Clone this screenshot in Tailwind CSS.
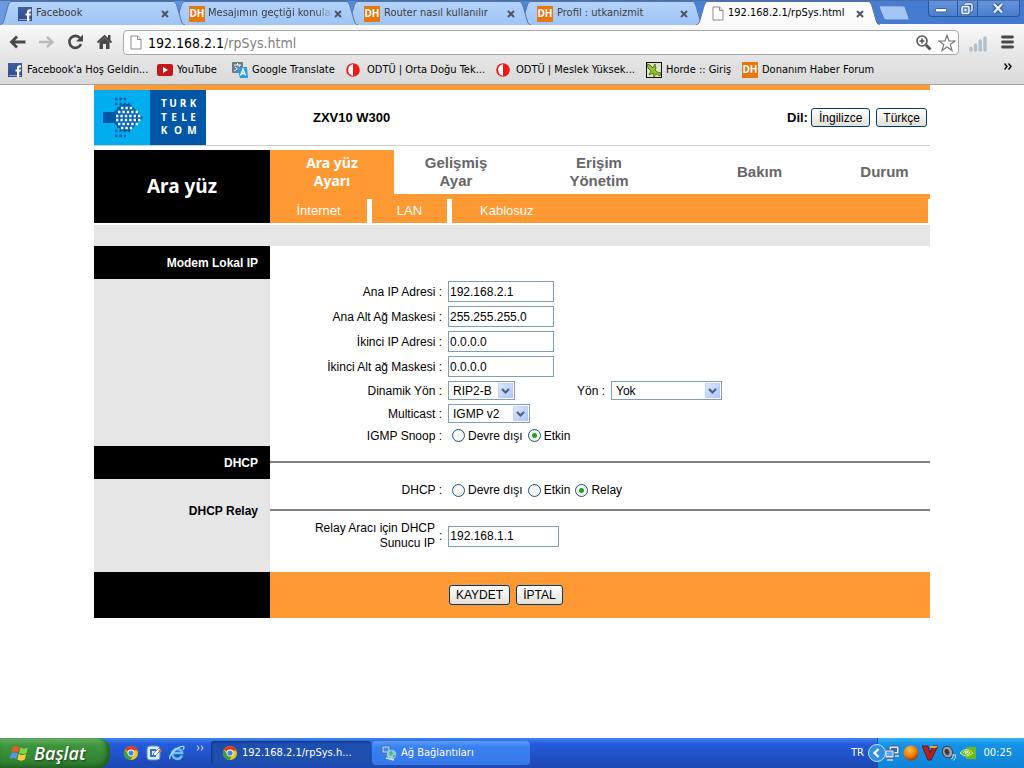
<!DOCTYPE html>
<html lang="tr">
<head>
<meta charset="utf-8">
<title>192.168.2.1/rpSys.html</title>
<script src="https://cdn.jsdelivr.net/npm/@tailwindcss/browser@4"></script>
</head>
<body class="flex min-h-screen flex-col bg-white font-['Liberation_Sans',Arial,sans-serif] text-xs text-black">

<svg class="absolute h-0 w-0" aria-hidden="true">
  <defs>
    <linearGradient id="tabfill" x1="0" y1="0" x2="0" y2="1"><stop offset="0" stop-color="#b4d2fb"/><stop offset="1" stop-color="#9fc4f5"/></linearGradient>
    <linearGradient id="fbg" x1="0" y1="0" x2="0" y2="1"><stop offset="0" stop-color="#3f5f9f"/><stop offset="1" stop-color="#2f4c88"/></linearGradient>
    <linearGradient id="arrowbg" x1="0" y1="0" x2="1" y2="1"><stop offset="0" stop-color="#dfe8ff"/><stop offset="1" stop-color="#adc5fb"/></linearGradient>
    <radialGradient id="ball" cx=".4" cy=".3" r=".7"><stop offset="0" stop-color="#ffc04a"/><stop offset=".6" stop-color="#f57c00"/><stop offset="1" stop-color="#a83c00"/></radialGradient>
  </defs>
  <symbol id="slopeL" viewBox="0 0 12 24"><path d="M0 24C3 23 3 22 4 19L8 5C9 2 10 .5 12 .5V24Z" fill="url(#tabfill)"/><path d="M0 24C3 23 3 22 4 19L8 5C9 2 10 .5 12 .5" fill="none" stroke="#4f74ad"/></symbol>
  <symbol id="slopeR" viewBox="0 0 12 24"><path d="M12 24C9 23 9 22 8 19L4 5C3 2 2 .5 0 .5V24Z" fill="url(#tabfill)"/><path d="M12 24C9 23 9 22 8 19L4 5C3 2 2 .5 0 .5" fill="none" stroke="#4f74ad"/></symbol>
  <symbol id="slopeLa" viewBox="0 0 12 24"><path d="M0 24C3 23 3 22 4 19L8 5C9 2 10 .5 12 .5V24Z" fill="#fafafa"/><path d="M0 24C3 23 3 22 4 19L8 5C9 2 10 .5 12 .5" fill="none" stroke="#4f74ad"/></symbol>
  <symbol id="slopeRa" viewBox="0 0 12 24"><path d="M12 24C9 23 9 22 8 19L4 5C3 2 2 .5 0 .5V24Z" fill="#fafafa"/><path d="M12 24C9 23 9 22 8 19L4 5C3 2 2 .5 0 .5" fill="none" stroke="#4f74ad"/></symbol>
  <symbol id="fb" viewBox="0 0 14 14"><rect width="14" height="14" fill="url(#fbg)"/><rect x="1" y="12" width="12" height="1" fill="#8fa6d3"/><path d="M9 14V8.500H7.500V6.500H9V5.200C9 3.200 10 2.300 11.600 2.300H13V4.400H12C11.300 4.400 11.200 4.800 11.200 5.400V6.500H13L12.700 8.500H11.200V14Z" fill="#fff"/></symbol>
  <symbol id="close" viewBox="0 0 8 8"><path d="M1 1L7 7M7 1L1 7" stroke="#4d5663" stroke-width="2"/></symbol>
  <symbol id="doc" viewBox="0 0 12 15"><path d="M1 1H7.500L11 4.500V14H1Z" fill="#fff" stroke="#8a8a8a"/><path d="M7.500 1V4.500H11" fill="#e4e4e4" stroke="#8a8a8a"/></symbol>
  <symbol id="odtu" viewBox="0 0 14 14"><circle cx="7" cy="7" r="6.800" fill="#f01818"/><path d="M7 1C.5 2.500 .5 11.500 7 13Z" fill="#fff"/></symbol>
  <symbol id="chrome" viewBox="0 0 16 16"><circle cx="8" cy="8" r="7" fill="#f2c41c"/><path d="M8 8L2 4.400A7 7 0 0 1 14.600 5.500H8Z" fill="#dc3b27"/><path d="M8 8L5.200 9.500L1.900 4.500A7 7 0 0 0 7.500 15L10.500 9.500Z" fill="#3a9d42"/><circle cx="8" cy="8" r="3.400" fill="#fff"/><circle cx="8" cy="8" r="2.600" fill="#4286d6"/></symbol>
  <symbol id="selarrow" viewBox="0 0 15 15"><rect width="15" height="15" rx="1.500" fill="url(#arrowbg)" stroke="#b5c9f7"/><path d="M4 6L7.500 9.500L11 6" fill="none" stroke="#4d6185" stroke-width="2.200"/></symbol>
</svg>

<!-- Browser chrome -->
<header class="font-['DejaVu_Sans_Condensed','DejaVu_Sans',sans-serif] text-[11px]">
  <div class="flex h-6 items-start justify-between border-t border-[#4c6fa8] bg-linear-to-r from-[#6b9ae2] via-[#5087dc] to-[#4278cf]">
    <nav class="flex text-[#3c3c3c]" aria-label="Sekmeler">
      <div class="relative z-40 flex h-6 w-[185px]">
        <svg class="h-6 w-3 shrink-0"><use href="#slopeL"/></svg>
        <div class="flex min-w-0 flex-1 items-center gap-1 border-t border-[#4f74ad] bg-linear-to-b from-[#b4d2fb] to-[#9fc4f5] pl-1.5">
          <svg class="size-3.5 shrink-0"><use href="#fb"/></svg><a href="#" class="flex-1 truncate">Facebook</a>
          <button aria-label="Kapat" class="mr-1"><svg class="size-2"><use href="#close"/></svg></button>
        </div>
        <svg class="h-6 w-3 shrink-0"><use href="#slopeR"/></svg>
      </div>
      <div class="relative z-30 -ml-3 flex h-6 w-[185px]">
        <svg class="h-6 w-3 shrink-0"><use href="#slopeL"/></svg>
        <div class="flex min-w-0 flex-1 items-center border-t border-[#4f74ad] bg-linear-to-b from-[#b4d2fb] to-[#9fc4f5] pl-1">
          <b class="mr-[3px] flex h-4 w-4 shrink-0 items-center justify-center bg-[#e5770d] font-['Open_Sans',sans-serif] text-[10px] text-white">DH</b><a href="#" class="flex-1 overflow-hidden whitespace-nowrap mask-r-from-85%">Mesajımın geçtiği konular</a>
          <button aria-label="Kapat" class="mr-1"><svg class="size-2"><use href="#close"/></svg></button>
        </div>
        <svg class="h-6 w-3 shrink-0"><use href="#slopeR"/></svg>
      </div>
      <div class="relative z-20 -ml-3 flex h-6 w-[185px]">
        <svg class="h-6 w-3 shrink-0"><use href="#slopeL"/></svg>
        <div class="flex min-w-0 flex-1 items-center gap-1 border-t border-[#4f74ad] bg-linear-to-b from-[#b4d2fb] to-[#9fc4f5] pl-1.5">
          <b class="flex h-4 w-4 shrink-0 items-center justify-center bg-[#e5770d] font-['Open_Sans',sans-serif] text-[10px] text-white">DH</b><a href="#" class="flex-1 truncate">Router nasıl kullanılır</a>
          <button aria-label="Kapat" class="mr-1"><svg class="size-2"><use href="#close"/></svg></button>
        </div>
        <svg class="h-6 w-3 shrink-0"><use href="#slopeR"/></svg>
      </div>
      <div class="relative z-10 -ml-3 flex h-6 w-[185px]">
        <svg class="h-6 w-3 shrink-0"><use href="#slopeL"/></svg>
        <div class="flex min-w-0 flex-1 items-center gap-1 border-t border-[#4f74ad] bg-linear-to-b from-[#b4d2fb] to-[#9fc4f5] pl-1.5">
          <b class="flex h-4 w-4 shrink-0 items-center justify-center bg-[#e5770d] font-['Open_Sans',sans-serif] text-[10px] text-white">DH</b><a href="#" class="flex-1 truncate">Profil : utkanizmit</a>
          <button aria-label="Kapat" class="mr-1"><svg class="size-2"><use href="#close"/></svg></button>
        </div>
        <svg class="h-6 w-3 shrink-0"><use href="#slopeR"/></svg>
      </div>
      <div class="relative z-50 -ml-2 flex h-6 w-[184px] text-black">
        <svg class="h-6 w-3 shrink-0"><use href="#slopeLa"/></svg>
        <div class="flex min-w-0 flex-1 items-center gap-1 border-t border-[#4f74ad] bg-[#fafafa] pl-1">
          <svg class="h-[15px] w-3 shrink-0"><use href="#doc"/></svg><a href="#" class="flex-1 truncate">192.168.2.1/rpSys.html</a>
          <button aria-label="Kapat" class="mr-1"><svg class="size-2"><use href="#close"/></svg></button>
        </div>
        <svg class="h-6 w-3 shrink-0"><use href="#slopeRa"/></svg>
      </div>
      <button aria-label="Yeni sekme" class="mt-1 -ml-0.5 h-4"><svg class="h-4 w-8" viewBox="0 0 32 16"><path d="M1.500 .8H24C26 .8 27 1.500 27.500 3L31 13.500C31.300 14.600 31 15 30 15H9C7 15 6 14.200 5.500 13L1 2Z" fill="#a4c6f6" stroke="#4f74ad"/></svg></button>
    </nav>
    <div class="mr-1 flex h-4 overflow-hidden rounded-b border border-t-0 border-[#2c5599] bg-linear-to-b from-[#6393dc] to-[#4a7ecd]">
      <button aria-label="Simge durumuna küçült" class="w-[29px] border-r border-[#2c5599]"><svg class="h-4 w-7" viewBox="0 0 28 16"><rect x="6.500" y="7.500" width="11" height="3.500" rx="1" fill="#fff" stroke="#3d5d96"/></svg></button>
      <button aria-label="Önceki boyut" class="w-5 border-r border-[#2c5599]"><svg class="h-4 w-5" viewBox="0 0 20 16"><rect x="7" y="3" width="7" height="7" rx="1" fill="none" stroke="#31548f" stroke-width="3"/><rect x="7" y="3" width="7" height="7" rx="1" fill="none" stroke="#fff" stroke-width="1.400"/><rect x="4" y="5.500" width="7" height="7" rx="1" fill="#5587d3" stroke="#31548f" stroke-width="3"/><rect x="4" y="5.500" width="7" height="7" rx="1" fill="#5587d3" stroke="#fff" stroke-width="1.400"/><rect x="6.500" y="8" width="2" height="2" fill="#fff"/></svg></button>
      <button aria-label="Pencereyi kapat" class="w-[41px]"><svg class="h-4 w-10" viewBox="0 0 40 16"><path d="M16 3L24 11.500M24 3L16 11.500" stroke="#31548f" stroke-width="4.500"/><path d="M16 3L24 11.500M24 3L16 11.500" stroke="#e6eefb" stroke-width="2.500"/></svg></button>
    </div>
  </div>

  <div class="border-b border-[#a4a4a4] bg-linear-to-b from-[#fafafa] via-[#e6e6e6] to-[#dadada]">
    <div class="flex h-8 items-end gap-3 pr-2 pl-[9px]">
      <button aria-label="Geri"><svg class="mb-1.5 h-4 w-[17px]" viewBox="0 0 17 16"><path d="M8 2.500L2.500 8L8 13.500M3 8H16.500" fill="none" stroke="#484848" stroke-width="2.800"/></svg></button>
      <button aria-label="İleri"><svg class="mb-1.5 h-4 w-[17px]" viewBox="0 0 17 16"><path d="M9 3L14.500 8L9 13M14 8H1" fill="none" stroke="#b9b9b9" stroke-width="2.400"/></svg></button>
      <button aria-label="Yenile"><svg class="mb-1.5 h-4 w-[17px]" viewBox="0 0 17 16"><path d="M13 4A6 6 0 1 0 14 10" fill="none" stroke="#484848" stroke-width="2.600"/><path d="M9 7.500H16V.5Z" fill="#484848"/></svg></button>
      <button aria-label="Ana sayfa"><svg class="mb-1.5 h-4 w-[17px]" viewBox="0 0 17 16"><path d="M1.500 8.500L8.500 2L15.500 8.500" fill="none" stroke="#484848" stroke-width="2"/><path d="M12 1H14.500V6H12Z" fill="#484848"/><path d="M3.500 8L8.500 3.500L13.500 8V15H10V10H7V15H3.500Z" fill="#484848"/></svg></button>
      <div class="-ml-0.5 mb-px flex h-[25px] flex-1 items-center gap-1.5 rounded-sm border border-[#a9a9a9] bg-white px-1.5">
        <svg class="h-[15px] w-3 shrink-0"><use href="#doc"/></svg>
        <div class="flex-1 font-['DejaVu_Sans_Condensed','DejaVu_Sans',sans-serif] text-sm">192.168.2.1<span class="text-[#808080]">/rpSys.html</span></div>
        <svg class="size-4" viewBox="0 0 16 16"><circle cx="6" cy="6" r="5" fill="none" stroke="#555" stroke-width="1.600"/><path d="M3.500 6H8.500M6 3.500V8.500" stroke="#555" stroke-width="1.600"/><path d="M10 10L14.500 14.500" stroke="#555" stroke-width="3"/></svg>
        <button aria-label="Yer işareti ekle"><svg class="-mr-1 block size-[18px]" viewBox="0 0 18 18"><path d="M9 1.300L11 6.800L17 7L12.300 10.600L14 16.500L9 13.100L4 16.500L5.700 10.600L1 7L7 6.800Z" fill="#fff" stroke="#777" stroke-width="1.200"/></svg></button>
      </div>
      <svg class="-ml-0.5 mb-1 h-4 w-[18px]" viewBox="0 0 18 16"><path d="M2 14V12.500M6.500 14V9M11.300 14V5M16 14V2" stroke="#b3bfc9" stroke-width="3.400" stroke-linecap="round"/></svg>
      <button aria-label="Menü"><svg class="mr-0.5 mb-1.5 ml-0.5 h-4 w-[13px]" viewBox="0 0 13 16"><path d="M1.500 3H11.500M1.500 8H11.500M1.500 13H11.500" stroke="#484848" stroke-width="2.800" stroke-linecap="round"/></svg></button>
    </div>
    <nav class="flex h-7 items-center pr-2 pl-2" aria-label="Yer işaretleri">
      <a href="#" class="flex w-[149px] items-center gap-[5px] whitespace-nowrap"><svg class="size-3.5"><use href="#fb"/></svg>Facebook'a Hoş Geldin...</a>
      <a href="#" class="flex w-[75px] items-center gap-1 whitespace-nowrap"><svg class="h-4 w-4" viewBox="0 0 16 16"><rect y="2" width="16" height="12" rx="2" fill="#c3191b"/><path d="M6 5L11 8L6 11Z" fill="#fff"/></svg>YouTube</a>
      <a href="#" class="flex w-[113px] items-center gap-1 whitespace-nowrap"><svg class="h-4 w-4" viewBox="0 0 16 16"><rect width="11" height="11" rx="1" fill="#677c85"/><path d="M2 3H9M5.500 1V3M8 3C7 6 4 8 2 9M3 5L8 9" stroke="#fff" fill="none"/><path d="M5 5H15L16 16H8Z" fill="#2b9be8"/><path d="M8.500 13.500L11 7L13.500 13.500M9.500 11.500H12.500" stroke="#fff" stroke-width="1.300" fill="none"/></svg>Google Translate</a>
      <a href="#" class="flex w-[151px] items-center gap-[7px] whitespace-nowrap"><svg class="ml-px size-3.5"><use href="#odtu"/></svg>ODTÜ | Orta Doğu Tek...</a>
      <a href="#" class="flex w-[150px] items-center gap-1.5 whitespace-nowrap"><svg class="size-3.5"><use href="#odtu"/></svg>ODTÜ | Meslek Yüksek...</a>
      <a href="#" class="flex w-24 items-center gap-1 whitespace-nowrap"><svg class="h-4 w-4" viewBox="0 0 16 16"><rect x=".5" y=".5" width="15" height="15" fill="#dfe5c8" stroke="#111"/><path d="M1 2L4 3L7 6L9 2L10 6L9 8L11 10L15 11L14 14L10 12L8 15L7 11L3 13L5 9L2 6Z" fill="#91c42a" stroke="#465f12" stroke-width=".8"/></svg>Horde :: Giriş</a>
      <a href="#" class="flex items-center gap-1 whitespace-nowrap"><b class="flex h-4 w-4 items-center justify-center bg-[#e5770d] font-['Open_Sans',sans-serif] text-[10px] text-white">DH</b>Donanım Haber Forum</a>
      <button aria-label="Diğer yer işaretleri" class="mr-1 mb-2 ml-auto"><svg class="h-[7px] w-2" viewBox="0 0 8 7"><path d="M.5 .5L3 3.500L.5 6.500M4.500 .5L7 3.500L4.500 6.500" fill="none" stroke="#111" stroke-width="1.500"/></svg></button>
    </nav>
  </div>
</header>

<!-- Router settings page -->
<main class="mx-auto w-full max-w-[836px] flex-1">
  <div class="grid grid-cols-[219px_1fr_auto] items-center border-t-[5px] border-b border-t-[#ff9933] border-b-[#cccccc]">
    <svg class="h-[55px] w-28" viewBox="0 0 112 55" role="img" aria-label="Türk Telekom">
      <rect width="56" height="55" fill="#00aeef"/><rect x="56" width="56" height="55" fill="#0057a8"/>
      <path d="M9 22H21V33H9Z" fill="#0057a8"/>
      <path d="M28 14H36L49 27.500L36 41H28L20 33V22Z" fill="#0057a8" opacity=".85"/>
      <g fill="none" stroke-width="2.400" stroke-dasharray="2.400 2">
        <path d="M21 9H32M21 14H36M23 18.500H38M21 41H36M21 46H32M23 36.500H38" stroke="#0057a8"/>
        <path d="M27 18H40M24 22H45M22 26H47M22 30H47M24 34H45M27 38H40" stroke="#fff"/>
      </g>
      <g fill="#fff" font-family="Open Sans, sans-serif" font-size="10" font-weight="700" text-anchor="middle">
        <text x="70" y="17">T</text><text x="79" y="17">U</text><text x="89" y="17">R</text><text x="99" y="17">K</text>
        <text x="70" y="31">T</text><text x="80" y="31">E</text><text x="90" y="31">L</text><text x="99" y="31">E</text>
        <text x="70" y="44">K</text><text x="84" y="44">O</text><text x="98" y="44">M</text>
      </g>
    </svg>
    <b class="text-[13px]">ZXV10 W300</b>
    <div class="flex items-center pr-[3px]">
      <b class="mr-[3px] text-[13px]">Dil:</b>
      <button class="mr-1.5 h-[19px] rounded-[3px] border border-[#003c74] bg-linear-to-b from-white to-[#e3e0d6] px-[7px]">İngilizce</button>
      <button class="h-[19px] rounded-[3px] border border-[#003c74] bg-linear-to-b from-white to-[#e3e0d6] px-1.5">Türkçe</button>
    </div>
  </div>

  <div class="mt-1 grid grid-cols-[176px_1fr]">
    <h1 class="flex items-center justify-center bg-black font-['Noto_Sans',sans-serif] text-[19px] font-bold text-white">Ara yüz</h1>
    <div>
      <nav class="grid h-11 grid-cols-[124px_124px_162px_159px_1fr] items-center text-center text-[15px] leading-[18px] font-bold text-[#666666]" aria-label="Ana menü">
        <a href="#" class="flex h-full items-center justify-center bg-[#ff9933] font-['Noto_Sans',sans-serif] text-sm leading-[18px] text-white">Ara yüz<br>Ayarı</a>
        <a href="#">Gelişmiş<br>Ayar</a>
        <a href="#">Erişim<br>Yönetim</a>
        <a href="#">Bakım</a>
        <a href="#">Durum</a>
      </nav>
      <div class="h-[5px] bg-[#ff9933]"></div>
      <nav class="mr-0.5 grid h-6 grid-cols-[97px_75px_1fr] gap-[5px] text-[13px] leading-6 text-white" aria-label="Alt menü">
        <a href="#" class="bg-[#ff9933] text-center">İnternet</a>
        <a href="#" class="bg-[#ff9933] text-center">LAN</a>
        <a href="#" class="bg-[#ff9933] pl-7">Kablosuz</a>
      </nav>
    </div>
  </div>
  <div class="mt-0.5 h-[21px] bg-[#e6e6e6]"></div>

  <form>
    <section class="grid grid-cols-[176px_1fr]">
      <div class="bg-[#e6e6e6]"><h2 class="h-[33px] bg-black pr-3 text-right leading-[34px] font-bold text-white">Modem Lokal IP</h2></div>
      <div class="pt-[33px]">
        <div class="grid h-[25px] grid-cols-[172px_1fr] items-center gap-1.5"><label for="ip1" class="text-right">Ana IP Adresi :</label><input id="ip1" value="192.168.2.1" class="h-[21px] w-[106px] border border-[#7f9db9] px-px"></div>
        <div class="grid h-[25px] grid-cols-[172px_1fr] items-center gap-1.5"><label for="mask1" class="text-right">Ana Alt Ağ Maskesi :</label><input id="mask1" value="255.255.255.0" class="h-[21px] w-[106px] border border-[#7f9db9] px-px"></div>
        <div class="grid h-[25px] grid-cols-[172px_1fr] items-center gap-1.5"><label for="ip2" class="text-right">İkinci IP Adresi :</label><input id="ip2" value="0.0.0.0" class="h-[21px] w-[106px] border border-[#7f9db9] px-px"></div>
        <div class="grid h-[25px] grid-cols-[172px_1fr] items-center gap-1.5"><label for="mask2" class="text-right">İkinci Alt ağ Maskesi :</label><input id="mask2" value="0.0.0.0" class="h-[21px] w-[106px] border border-[#7f9db9] px-px"></div>
        <div class="grid h-[23px] grid-cols-[172px_1fr] items-center gap-1.5"><label for="rip" class="text-right">Dinamik Yön :</label>
          <div class="flex items-center">
            <span class="relative"><select id="rip" class="block h-[19px] w-[67px] appearance-none border border-[#7f9db9] bg-white pl-1"><option>RIP2-B</option></select><svg class="pointer-events-none absolute top-0.5 right-0.5 size-[15px]"><use href="#selarrow"/></svg></span>
            <label for="dir" class="mr-1.5 w-[90px] text-right">Yön :</label>
            <span class="relative"><select id="dir" class="block h-[19px] w-[111px] appearance-none border border-[#7f9db9] bg-white pl-1"><option>Yok</option></select><svg class="pointer-events-none absolute top-0.5 right-0.5 size-[15px]"><use href="#selarrow"/></svg></span>
          </div></div>
        <div class="grid h-[23px] grid-cols-[172px_1fr] items-center gap-1.5"><label for="multi" class="text-right">Multicast :</label>
          <div class="flex"><span class="relative"><select id="multi" class="block h-[19px] w-[82px] appearance-none border border-[#7f9db9] bg-white pl-1"><option>IGMP v2</option></select><svg class="pointer-events-none absolute top-0.5 right-0.5 size-[15px]"><use href="#selarrow"/></svg></span></div></div>
        <div role="radiogroup" aria-label="IGMP Snoop" class="grid h-[21px] grid-cols-[172px_1fr] items-center gap-1.5"><span class="text-right">IGMP Snoop :</span>
          <div class="flex items-center gap-[5px] pl-1">
            <label class="flex items-center gap-[3px]"><input type="radio" name="snoop" class="size-[13px] appearance-none rounded-full border border-[#1c5180] bg-[#f6f6f3] checked:bg-[radial-gradient(circle,#21a121_0_2px,#f6f6f3_3px)]">Devre dışı</label>
            <label class="flex items-center gap-[3px]"><input type="radio" name="snoop" checked class="size-[13px] appearance-none rounded-full border border-[#1c5180] bg-[#f6f6f3] checked:bg-[radial-gradient(circle,#21a121_0_2px,#f6f6f3_3px)]">Etkin</label>
          </div></div>
      </div>
    </section>

    <section class="grid grid-cols-[176px_1fr]">
      <div class="bg-[#e6e6e6]">
        <h2 class="h-[33px] bg-black pr-3 text-right leading-[34px] font-bold text-white">DHCP</h2>
        <h2 class="mt-4 pr-3 text-right leading-8 font-bold">DHCP Relay</h2>
      </div>
      <div class="pb-[21px]">
        <hr class="mt-[15px] border-t-2 border-[#808080]">
        <div role="radiogroup" aria-label="DHCP" class="mt-4 grid h-[22px] grid-cols-[172px_1fr] items-center gap-1.5"><span class="text-right">DHCP :</span>
          <div class="flex items-center gap-[5px] pl-1">
            <label class="flex items-center gap-[3px]"><input type="radio" name="dhcp" class="size-[13px] appearance-none rounded-full border border-[#1c5180] bg-[#f6f6f3] checked:bg-[radial-gradient(circle,#21a121_0_2px,#f6f6f3_3px)]">Devre dışı</label>
            <label class="flex items-center gap-[3px]"><input type="radio" name="dhcp" class="size-[13px] appearance-none rounded-full border border-[#1c5180] bg-[#f6f6f3] checked:bg-[radial-gradient(circle,#21a121_0_2px,#f6f6f3_3px)]">Etkin</label>
            <label class="flex items-center gap-[3px]"><input type="radio" name="dhcp" checked class="size-[13px] appearance-none rounded-full border border-[#1c5180] bg-[#f6f6f3] checked:bg-[radial-gradient(circle,#21a121_0_2px,#f6f6f3_3px)]">Relay</label>
          </div></div>
        <hr class="mt-2 border-t-2 border-[#808080]">
        <div class="mt-[10px] grid grid-cols-[165px_1fr] items-center gap-1">
          <label for="relay" class="text-right leading-[15px]">Relay Aracı için DHCP<br>Sunucu IP</label>
          <div class="flex items-center gap-1.5"><span>:</span><input id="relay" value="192.168.1.1" class="h-[21px] w-[111px] border border-[#7f9db9] px-px"></div>
        </div>
      </div>
    </section>

    <div class="grid h-[46px] grid-cols-[176px_1fr] bg-black">
      <div></div>
      <div class="flex items-center gap-1.5 bg-[#ff9933] pl-[179px]">
        <button type="button" class="h-5 rounded-[3px] border border-[#003c74] bg-linear-to-b from-white to-[#e3e0d6] px-1.5">KAYDET</button>
        <button type="button" class="h-5 rounded-[3px] border border-[#003c74] bg-linear-to-b from-white to-[#e3e0d6] px-1.5">İPTAL</button>
      </div>
    </div>
  </form>
</main>

<!-- Taskbar -->
<footer class="flex h-[30px] items-stretch bg-linear-to-b from-[#4083ee] via-[#245bdc] via-20% to-[#1e47b2] font-['DejaVu_Sans_Condensed','DejaVu_Sans',sans-serif] text-[11px] text-white">
  <button class="flex w-[110px] items-center gap-1 rounded-r-xl bg-linear-to-b from-[#6bb46b] via-[#3c963c] via-25% to-[#2e7d2e] pl-2.5 shadow-[inset_-3px_-2px_5px_#1f5a1f]">
    <svg class="size-5" viewBox="0 0 20 20"><path d="M3 4C5 2.500 7 2.500 9.500 4L8 9.500C6 8 4 8 1.500 9.500Z" fill="#ee5a2a"/><path d="M10.500 4.500C13 6 15 6 18 4.500L16.500 10C14 11.500 12 11.500 9 10Z" fill="#8cd04a"/><path d="M1.200 10.500C4 9 6 9 7.800 10.500L6.300 16C4 14.500 2 14.500-.2 16Z" fill="#5a92f0"/><path d="M8.800 11C11 12.500 13.500 12.500 16.200 11L14.700 16.500C12 18 10 18 7.300 16.500Z" fill="#fbcf3a"/></svg>
    <span class="font-['Open_Sans',sans-serif] text-lg font-semibold italic [text-shadow:1px_1px_2px_#1b401b]">Başlat</span>
  </button>
  <div class="ml-[13px] flex items-center gap-[7px]">
    <a href="#" aria-label="Chrome"><svg class="size-4"><use href="#chrome"/></svg></a>
    <a href="#" aria-label="Masaüstünü göster"><svg class="size-4" viewBox="0 0 16 16"><rect x="1" y="1" width="13" height="14" rx="3" fill="#dceafa" stroke="#5b8fce"/><path d="M4 4H10V6H6V10H10V12H4Z" fill="#2f73c2"/><path d="M7 9L13 3L15 5L9 11Z" fill="#fff" stroke="#3b6ea8" stroke-width=".8"/><circle cx="14" cy="6" r="1.500" fill="#e86b1b"/></svg></a>
    <a href="#" aria-label="Internet Explorer"><svg class="size-4" viewBox="0 0 16 16"><path d="M13 10.500A5 5 0 1 1 13.200 8H4" fill="none" stroke="#69c2f8" stroke-width="2.600"/><path d="M1 14C-1 10 9 1 14.500 1.500C15.500 2 15 3.500 14 5" fill="none" stroke="#b6e2ff" stroke-width="1.200"/></svg></a>
    <svg class="mb-2.5 ml-1 h-1.5 w-2" viewBox="0 0 8 6"><path d="M1 .5L3 3L1 5.500M5 .5L7 3L5 5.500" fill="none" stroke="#b7d0fb" stroke-width="1.200"/></svg>
  </div>
  <button class="my-[3px] ml-[7px] flex w-40 items-center gap-1 rounded-sm bg-[#1e4fae] pl-[11px] shadow-[inset_1px_1px_2px_#10307a]"><svg class="size-4"><use href="#chrome"/></svg>192.168.2.1/rpSys.h...</button>
  <button class="my-[3px] ml-px flex w-[158px] items-center gap-1 rounded-sm bg-linear-to-b from-[#5a9bfa] via-[#3a80f3] via-25% to-[#3577e8] pl-[9px]"><svg class="size-4" viewBox="0 0 16 16"><rect x="1" y="1" width="8" height="7" rx="1" fill="#cfe2f7" stroke="#42689b"/><rect x="2.500" y="2.500" width="5" height="4" fill="#3e8ee0"/><circle cx="10.500" cy="9.500" r="4.800" fill="#8cc8f5"/><path d="M8 7L11 6L12 9L9 11ZM12 10L15 10L12 13Z" fill="#59b748"/><path d="M5 13L13 15" stroke="#ddd" stroke-width="1.500"/></svg>Ağ Bağlantıları</button>
  <span class="mr-[13px] ml-auto self-center">TR</span>
  <div class="relative flex w-[147px] items-center justify-end gap-[3px] border-l border-[#0b54b8] bg-linear-to-b from-[#35b2f5] via-[#1493ea] via-20% to-[#1083d6] pr-3">
    <button aria-label="Gizli simgeleri göster" class="absolute top-1.5 -left-2.5"><svg class="size-[18px]" viewBox="0 0 18 18"><circle cx="9" cy="9" r="8.500" fill="#2f8fe4" stroke="#c7e5fc"/><path d="M10.500 5L6.500 9L10.500 13" fill="none" stroke="#fff" stroke-width="2.400"/></svg></button>
    <svg class="size-4" viewBox="0 0 16 16"><rect x="5" y="1" width="10" height="8" rx="1" fill="#e3e8ee" stroke="#4a6180"/><rect x="7" y="3" width="6" height="4" fill="#3268c0"/><rect x="1" y="5" width="9" height="8" rx="1" fill="#e3e8ee" stroke="#4a6180"/><rect x="2.500" y="6.500" width="6" height="4.500" fill="#58a6ee"/><path d="M3 15H9M11 11H15" stroke="#d0d8e0" stroke-width="1.500"/></svg>
    <svg class="size-4" viewBox="0 0 16 16"><circle cx="8" cy="8" r="7.500" fill="url(#ball)"/></svg>
    <svg class="size-4" viewBox="0 0 16 16"><path d="M0 1H6L8 8L11 1H16L9 15H6Z" fill="#b5201a" stroke="#5c0d0a" stroke-width=".8"/><path d="M8 1H16L14 3H8Z" fill="#e8a53a"/></svg>
    <svg class="size-4" viewBox="0 0 16 16"><ellipse cx="6.500" cy="7" rx="5" ry="6" transform="rotate(-25 6.500 7)" fill="#9aa0a6" stroke="#3c4046"/><ellipse cx="6" cy="7" rx="2.200" ry="3" transform="rotate(-25 6 7)" fill="#34383d"/><path d="M12 9Q13 12 10.500 14M14 9Q15.500 13 12.500 15.500" fill="none" stroke="#cbe5fb"/></svg>
    <svg class="mr-1 size-4" viewBox="0 0 16 16"><path d="M6 2H16V14H6Z" fill="#74b71b"/><path d="M0 8Q6 1 13 8Q6 14 0 8Z" fill="#74b71b" stroke="#d6f2a0" stroke-width=".9"/><path d="M3 8Q6.500 4 10 8Q7 11 5 8Q7 6 8 8" fill="none" stroke="#e8fac5"/></svg>
    <time>00:25</time>
  </div>
</footer>
</body>
</html>
